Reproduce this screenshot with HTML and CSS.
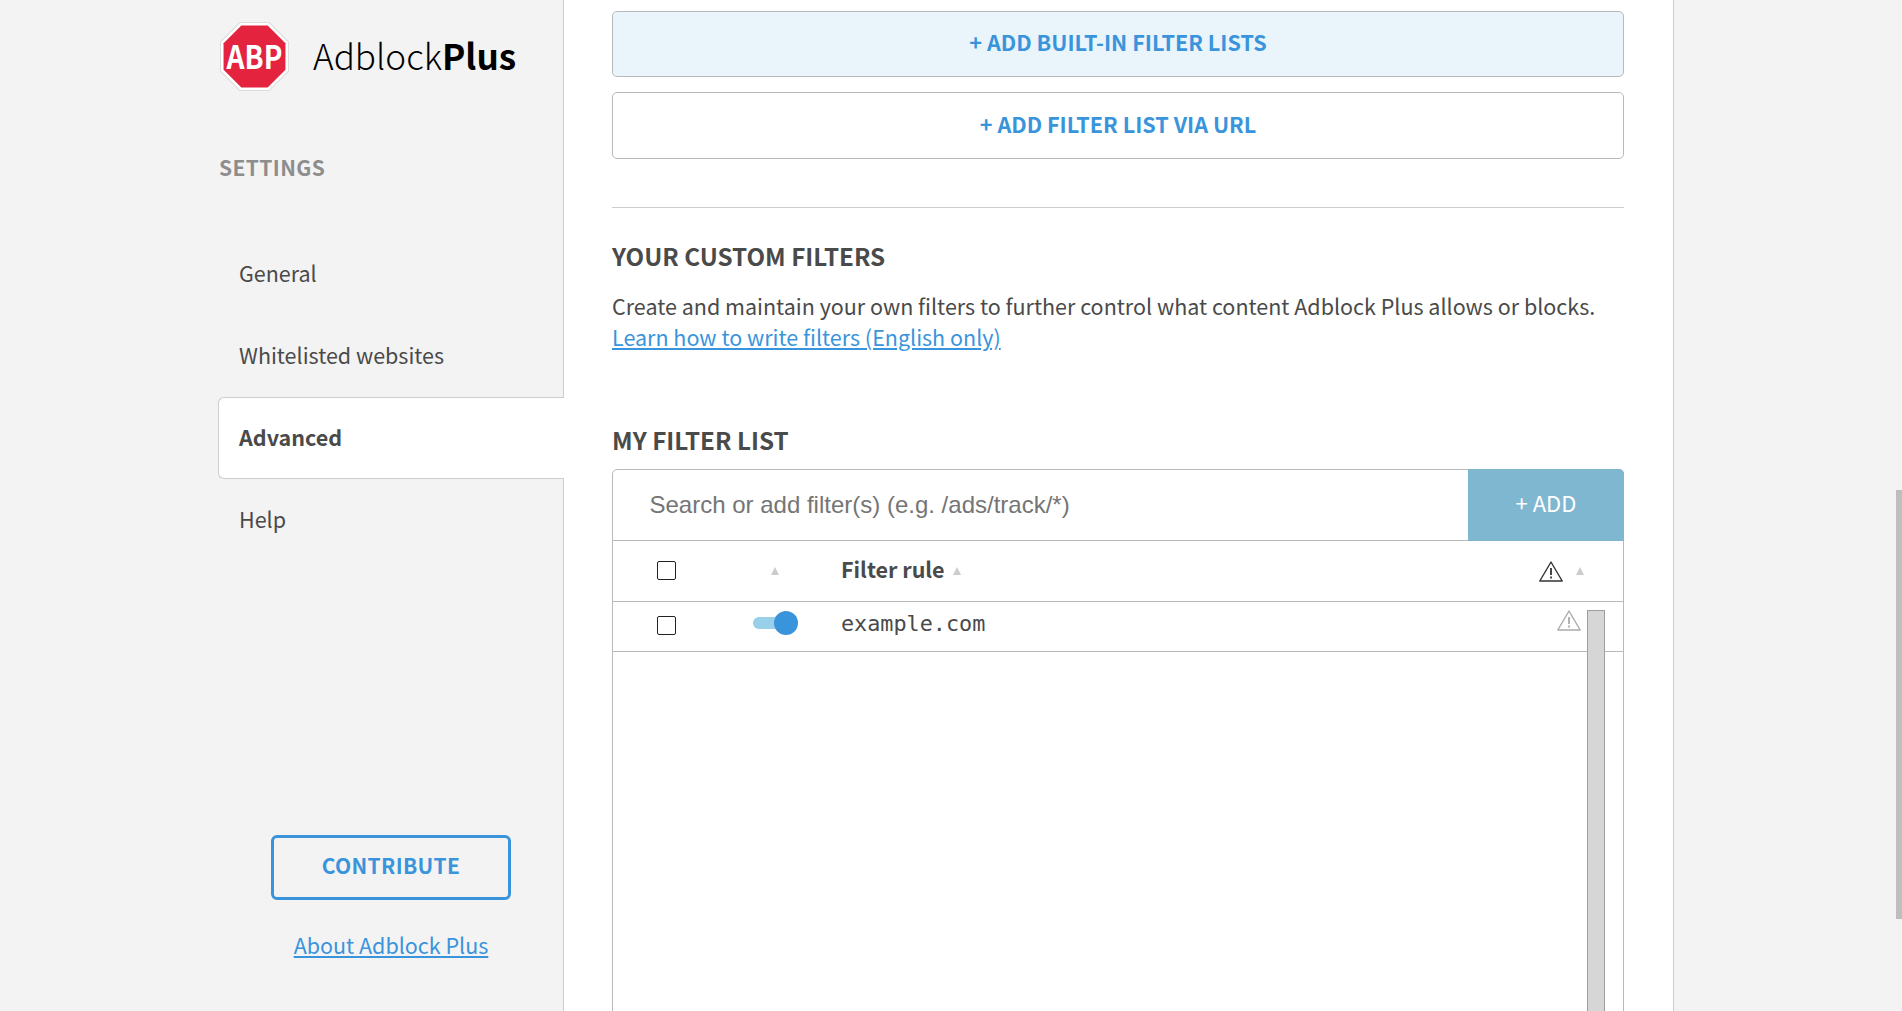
FILE: index.html
```html
<!DOCTYPE html>
<html lang="en">
<head>
<meta charset="utf-8">
<title>Adblock Plus Settings</title>
<link rel="stylesheet" href="styles.css">
</head>
<body>
<div class="page">
  <aside class="sidebar">
    <div class="brand">
      <svg class="logo" viewBox="0 0 70 70" width="71" height="71">
        <polygon points="20.5,1.5 49.5,1.5 68.5,20.5 68.5,49.5 49.5,68.5 20.5,68.5 1.5,49.5 1.5,20.5" fill="#fff" stroke="#dcdcdc" stroke-linejoin="round"/>
        <polygon points="22,4.5 48,4.5 65.5,22 65.5,48 48,65.5 22,65.5 4.5,48 4.5,22" fill="#e4243f"/>
        <text x="35" y="47" text-anchor="middle" textLength="55" lengthAdjust="spacingAndGlyphs" class="logo-text">ABP</text>
      </svg>
      <span class="wordmark">Adblock<b>Plus</b></span>
    </div>
    <h2 class="settings">SETTINGS</h2>
    <nav class="nav">
      <a class="nav-item">General</a>
      <a class="nav-item">Whitelisted websites</a>
      <a class="nav-item active">Advanced</a>
      <a class="nav-item">Help</a>
    </nav>
    <div class="side-foot">
      <a class="contribute">CONTRIBUTE</a>
      <a class="about">About Adblock Plus</a>
    </div>
  </aside>
  <main class="main">
    <button class="wide-btn tinted">+ ADD BUILT-IN FILTER LISTS</button>
    <button class="wide-btn">+ ADD FILTER LIST VIA URL</button>
    <hr class="rule">
    <h3 class="head">YOUR CUSTOM FILTERS</h3>
    <p class="desc">Create and maintain your own filters to further control what content Adblock Plus allows or blocks.<br><a class="link">Learn how to write filters (English only)</a></p>
    <h3 class="head list-head">MY FILTER LIST</h3>
    <section class="box">
      <div class="search">
        <span class="placeholder">Search or add filter(s) (e.g. /ads/track/*)</span>
        <span class="add">+ ADD</span>
      </div>
      <div class="row header">
        <span class="cell-check"><i class="check"></i></span>
        <span class="cell-toggle"><i class="sort"></i></span>
        <span class="cell-rule title"><b>Filter rule</b><i class="sort"></i></span>
        <span class="cell-warn">
          <svg width="24" height="21" viewBox="0 0 24 21"><path d="M12 1 L23.2 20 H0.8 Z" fill="none" stroke="#333" stroke-width="1.4" stroke-linejoin="round"/><path d="M12 7V14M12 15.5V17.5" stroke="#333" stroke-width="1.8"/></svg>
          <i class="sort"></i>
        </span>
      </div>
      <div class="row item">
        <span class="cell-check"><i class="check"></i></span>
        <span class="cell-toggle lifted"><span class="toggle"><i class="track"></i><i class="knob"></i></span></span>
        <span class="cell-rule mono">example.com</span>
        <span class="cell-warn dim">
          <svg width="24" height="21" viewBox="0 0 24 21"><path d="M12 1 L23.2 20 H0.8 Z" fill="none" stroke="#aaa" stroke-width="1.4" stroke-linejoin="round"/><path d="M12 7V14M12 15.5V17.5" stroke="#aaa" stroke-width="1.8"/></svg>
        </span>
      </div>
      <div class="table-scroll"></div>
    </section>
  </main>
  <div class="gutter"><div class="thumb"></div></div>
</div>
</body>
</html>
```

FILE: styles.css
```css
* { box-sizing: border-box; }
html, body { margin: 0; height: 100%; overflow: hidden; }
body {
  font-family: "Noto Sans CJK SC", "Source Sans Pro", "Open Sans", sans-serif;
  color: #4a4a4a;
  background: #f3f3f3;
}
.page { display: flex; height: 1011px; }

.sidebar {
  width: 564px;
  flex: none;
  border-right: 1px solid #cdcdcd;
  padding: 21px 0 0 219px;
  display: flex;
  flex-direction: column;
  position: relative;
}
.brand { display: flex; align-items: center; gap: 23px; height: 70px; }
.logo { flex: none; }
.logo-text { font: 700 32px "Noto Sans CJK SC", sans-serif; fill: #fff; }
.wordmark { font-size: 35.1px; line-height: 42px; color: #000; font-weight: 300; padding-bottom: 2px; }
.wordmark b { font-weight: 700; }
.settings { margin: 61px 0 0; font-size: 21px; line-height: 30px; font-weight: 700; color: #8d8d8d; letter-spacing: 0.4px; }
.nav { margin: 51px -1px 0 -1px; display: flex; flex-direction: column; }
.nav-item { height: 82px; display: flex; align-items: center; padding: 0 0 3px 21px; font-size: 21.5px; color: #4a4a4a; }
.nav-item.active {
  background: #fff;
  border: 1px solid #cdcdcd;
  border-right: 0;
  border-radius: 6px 0 0 6px;
  font-weight: 700;
  padding-left: 20px;
}
.side-foot { margin: auto 0 0 52px; width: 240px; display: flex; flex-direction: column; align-items: center; padding-bottom: 49px; }
.contribute { width: 240px; height: 65px; padding-bottom: 5px; border: 3px solid #3a94dc; border-radius: 6px; display: flex; align-items: center; justify-content: center; color: #3a94dc; font-size: 21px; font-weight: 700; letter-spacing: .3px; }
.about { margin-top: 28px; font-size: 21.5px; line-height: 34px; color: #3a94dc; text-decoration: underline; text-underline-offset: 2px; }

.main {
  width: 1110px;
  flex: none;
  background: #fff;
  border-right: 1px solid #cdcdcd;
  padding: 11px 49px 0 48px;
  height: 1011px;
  overflow: hidden;
}
.wide-btn {
  display: block;
  width: 100%;
  height: 67px;
  margin: 0 0 15px;
  padding: 0 0 4px;
  background: #fff;
  border: 1px solid #b9b9b9;
  border-radius: 5px;
  color: #3a94dc;
  font: 700 21.6px "Noto Sans CJK SC", sans-serif;
}
.wide-btn.tinted { background: #e9f4fb; height: 66px; padding-bottom: 6px; }
.rule { border: 0; border-top: 1px solid #cdcdcd; margin: 48px 0 0; }
.head { margin: 31px 0 0; font-size: 24.2px; line-height: 34px; font-weight: 700; color: #4a4a4a; }
.desc { margin: 17px 0 0; font-size: 21.5px; line-height: 31px; color: #4a4a4a; }
.link { color: #3a94dc; text-decoration: underline; text-underline-offset: 2px; }
.head.list-head { margin-top: 71px; }

.box {
  margin-top: 12px;
  height: 700px;
  border: 1px solid #b9b9b9;
  border-radius: 5px 5px 0 0;
  position: relative;
}
.search { display: flex; height: 71px; border-bottom: 1px solid #b9b9b9; }
.placeholder { flex: 1; padding-left: 36.5px; font: 24px/70px "Liberation Sans", Arial, sans-serif; color: #757575; }
.add { width: 156px; margin: -1px -1px -1px 0; padding: 0 0 6px; background: #7fb6d0; color: #fff; font-size: 22px; display: flex; align-items: center; justify-content: center; border-radius: 0 5px 0 0; }
.row { display: flex; align-items: center; border-bottom: 1px solid #b9b9b9; }
.header { height: 61px; }
.item { height: 50px; }
.cell-check { width: 74px; margin-left: 44px; padding-bottom: 2px; flex: none; display: flex; }
.check { width: 19px; height: 19px; border: 1px solid #222; border-radius: 2px; background: #fff; display: block; }
.cell-toggle { width: 89px; flex: none; display: flex; justify-content: center; }
.cell-toggle.lifted { padding-bottom: 8px; }
.header .cell-toggle { padding-right: 2px; }
.cell-rule { flex: 1; padding-left: 21px; display: flex; align-items: center; font-size: 21.5px; }
.cell-rule.title { padding-bottom: 6px; }
.cell-rule b { font-weight: 700; color: #4a4a4a; }
.mono { font: 21.8px "DejaVu Sans Mono", monospace; color: #4a4a4a; padding-bottom: 7px; }
.sort { display: block; width: 0; height: 0; border-left: 4.5px solid transparent; border-right: 4.5px solid transparent; border-bottom: 8px solid #ccc; }
.cell-rule .sort { margin: 6px 0 0 8px; }
.cell-warn { width: 84px; flex: none; display: flex; align-items: center; gap: 13px; }
.cell-warn.dim { padding: 0 0 12px 18px; }
.toggle { position: relative; width: 45px; height: 24px; display: block; }
.track { position: absolute; left: 0; top: 6px; width: 38px; height: 12px; border-radius: 6px; background: #98cfe9; }
.knob { position: absolute; right: 0; top: 0; width: 24px; height: 24px; border-radius: 50%; background: #3a94dc; }
.table-scroll {
  position: absolute;
  right: 18px;
  top: 140px;
  bottom: 0;
  width: 18px;
  background: #d6d6d6;
  border: 1px solid #9e9e9e;
  border-bottom: 0;
}

.gutter { flex: 1; position: relative; }
.thumb { position: absolute; right: 0; top: 490px; width: 6px; height: 429px; background: #bebebe; }
```
